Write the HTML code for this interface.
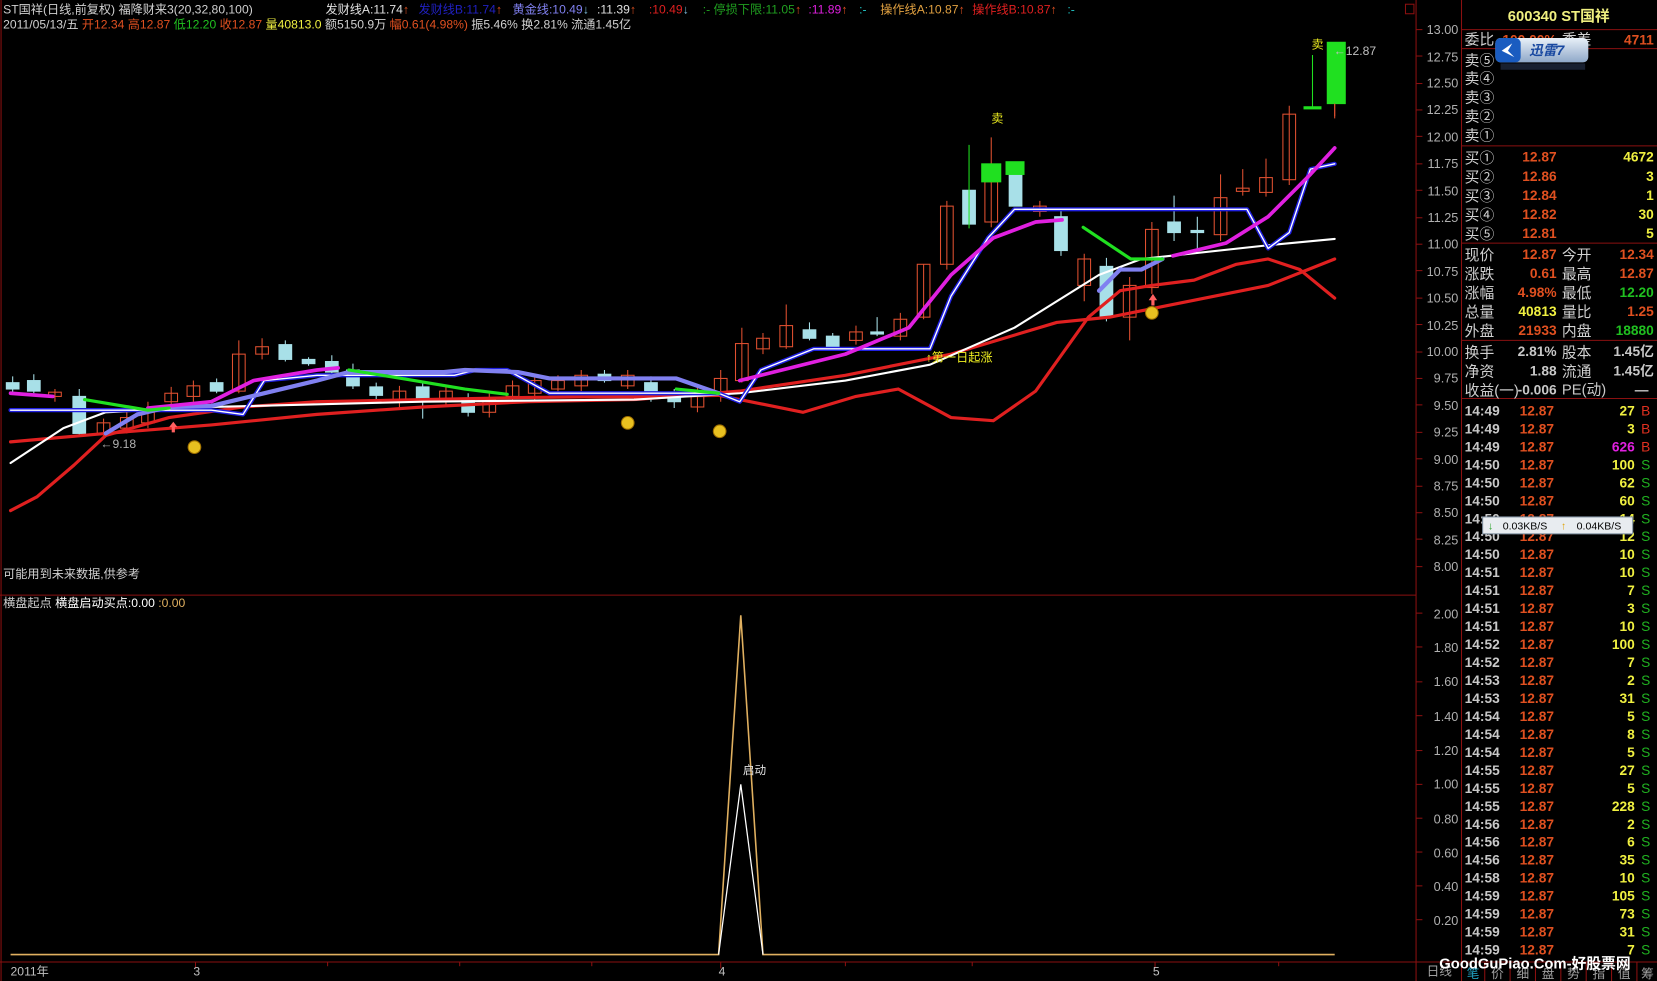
<!DOCTYPE html>
<html><head><meta charset="utf-8"><style>
html,body{margin:0;padding:0;background:#000;overflow:hidden;width:1657px;height:981px}
svg{display:block}
text{font-family:"Liberation Sans","Noto Sans CJK SC",sans-serif}
</style></head><body>
<svg width="1657" height="981" viewBox="0 0 1568 928" preserveAspectRatio="none" xmlns="http://www.w3.org/2000/svg">
<rect width="1568" height="928" fill="#000"/>
<g stroke="#8a1010" stroke-width="1" fill="none">
<line x1="1340" y1="0" x2="1340" y2="928"/>
<line x1="0" y1="563" x2="1340" y2="563"/>
<line x1="0" y1="910" x2="1383" y2="910"/>
<line x1="1383" y1="0" x2="1383" y2="928"/>
<line x1="1383" y1="28" x2="1568" y2="28"/>
<line x1="1383" y1="46" x2="1568" y2="46"/>
<line x1="1383" y1="138" x2="1568" y2="138"/>
<line x1="1383" y1="230" x2="1568" y2="230"/>
<line x1="1383" y1="322" x2="1568" y2="322"/>
<line x1="1383" y1="377" x2="1568" y2="377"/>
<line x1="1" y1="0" x2="1" y2="928"/>
<rect x="1330" y="4" width="8" height="9"/>
</g>
<g stroke="#8a1010">
<line x1="1340" y1="28" x2="1346" y2="28"/><line x1="1340" y1="53" x2="1346" y2="53"/><line x1="1340" y1="79" x2="1346" y2="79"/><line x1="1340" y1="104" x2="1346" y2="104"/><line x1="1340" y1="129" x2="1346" y2="129"/><line x1="1340" y1="155" x2="1346" y2="155"/><line x1="1340" y1="180" x2="1346" y2="180"/><line x1="1340" y1="206" x2="1346" y2="206"/><line x1="1340" y1="231" x2="1346" y2="231"/><line x1="1340" y1="256" x2="1346" y2="256"/><line x1="1340" y1="282" x2="1346" y2="282"/><line x1="1340" y1="307" x2="1346" y2="307"/><line x1="1340" y1="333" x2="1346" y2="333"/><line x1="1340" y1="358" x2="1346" y2="358"/><line x1="1340" y1="383" x2="1346" y2="383"/><line x1="1340" y1="409" x2="1346" y2="409"/><line x1="1340" y1="434" x2="1346" y2="434"/><line x1="1340" y1="460" x2="1346" y2="460"/><line x1="1340" y1="485" x2="1346" y2="485"/><line x1="1340" y1="510" x2="1346" y2="510"/><line x1="1340" y1="536" x2="1346" y2="536"/>
<line x1="1340" y1="580" x2="1346" y2="580"/><line x1="1340" y1="612" x2="1346" y2="612"/><line x1="1340" y1="645" x2="1346" y2="645"/><line x1="1340" y1="677" x2="1346" y2="677"/><line x1="1340" y1="710" x2="1346" y2="710"/><line x1="1340" y1="742" x2="1346" y2="742"/><line x1="1340" y1="774" x2="1346" y2="774"/><line x1="1340" y1="806" x2="1346" y2="806"/><line x1="1340" y1="838" x2="1346" y2="838"/><line x1="1340" y1="870" x2="1346" y2="870"/>
<line x1="185" y1="910" x2="185" y2="916"/><line x1="682" y1="910" x2="682" y2="916"/><line x1="1093" y1="910" x2="1093" y2="916"/><line x1="310" y1="910" x2="310" y2="914"/><line x1="435" y1="910" x2="435" y2="914"/><line x1="560" y1="910" x2="560" y2="914"/><line x1="800" y1="910" x2="800" y2="914"/><line x1="920" y1="910" x2="920" y2="914"/><line x1="1210" y1="910" x2="1210" y2="914"/>
</g>
<g fill="#b0b0b0" font-size="12" text-anchor="end">
<text x="1380" y="32">13.00</text><text x="1380" y="58">12.75</text><text x="1380" y="83">12.50</text><text x="1380" y="108">12.25</text><text x="1380" y="134">12.00</text><text x="1380" y="159">11.75</text><text x="1380" y="185">11.50</text><text x="1380" y="210">11.25</text><text x="1380" y="235">11.00</text><text x="1380" y="261">10.75</text><text x="1380" y="286">10.50</text><text x="1380" y="312">10.25</text><text x="1380" y="337">10.00</text><text x="1380" y="362">9.75</text><text x="1380" y="388">9.50</text><text x="1380" y="413">9.25</text><text x="1380" y="439">9.00</text><text x="1380" y="464">8.75</text><text x="1380" y="489">8.50</text><text x="1380" y="515">8.25</text><text x="1380" y="540">8.00</text>
<text x="1380" y="585">2.00</text><text x="1380" y="617">1.80</text><text x="1380" y="649">1.60</text><text x="1380" y="682">1.40</text><text x="1380" y="714">1.20</text><text x="1380" y="746">1.00</text><text x="1380" y="779">0.80</text><text x="1380" y="811">0.60</text><text x="1380" y="843">0.40</text><text x="1380" y="875">0.20</text>
</g>
<g font-size="11.5">
<text x="3" y="13" fill="#d0d0d0">ST国祥(日线,前复权) 福降财来3(20,32,80,100)</text>
<text x="308" y="13" fill="#e0e0e0">发财线A:11.74<tspan fill="#e05020">↑</tspan></text>
<text x="396" y="13" fill="#2020c0">发财线B:11.74<tspan fill="#e05020">↑</tspan></text>
<text x="485" y="13" fill="#8080f0">黄金线:10.49<tspan fill="#80c0e0">↓</tspan></text>
<text x="565" y="13" fill="#e0e0e0">:11.39<tspan fill="#e05020">↑</tspan></text>
<text x="614" y="13" fill="#e02020">:10.49<tspan fill="#80c0e0">↓</tspan></text>
<text x="665" y="13" fill="#20a020">:- 停损下限:11.05<tspan fill="#e05020">↑</tspan></text>
<text x="765" y="13" fill="#e020e0">:11.89<tspan fill="#e05020">↑</tspan></text>
<text x="813" y="13" fill="#20c0c0">:-</text>
<text x="833" y="13" fill="#e0a040">操作线A:10.87<tspan fill="#e05020">↑</tspan></text>
<text x="920" y="13" fill="#e02020">操作线B:10.87<tspan fill="#e05020">↑</tspan></text>
<text x="1010" y="13" fill="#20c0c0">:-</text>
<text x="3" y="27" fill="#d0d0d0">2011/05/13/五 <tspan fill="#e05020">开12.34 高12.87</tspan> <tspan fill="#20c020">低12.20</tspan> <tspan fill="#e05020">收12.87</tspan> <tspan fill="#f0f040">量40813.0</tspan> 额5150.9万 <tspan fill="#e05020">幅0.61(4.98%)</tspan> 振5.46% 换2.81% 流通1.45亿</text>
<text x="3" y="547" fill="#d0d0d0">可能用到未来数据,供参考</text>
<text x="3" y="574" fill="#d0d0d0">横盘起点  <tspan fill="#fff">横盘启动买点:0.00</tspan> <tspan fill="#e0b060">:0.00</tspan></text>
<text x="10" y="923" fill="#c0c0c0">2011年</text><text x="183" y="923" fill="#c0c0c0">3</text><text x="680" y="923" fill="#c0c0c0">4</text><text x="1091" y="923" fill="#c0c0c0">5</text>
</g>
<g stroke="#e05030" fill="none" stroke-width="1">
<path d="M52 368V380M98 396V415M120 390V410M140 380V405M162 366V385M183 360V380M226 322V372M248 320V340M378 365V385M422 365V385M463 372V395M485 360V380M506 355V378M528 355V372M550 350V370M594 350V368M660 365V390M682 350V380M702 310V362M722 315V335M744 288V330M810 308V326M852 296V322M874 250V302M896 190V255M938 130V215M984 190V205M1026 240V285M1069 262V322M1090 210V278M1155 165V228M1176 160V185M1198 150V186M1220 100V175M1263 95V110"/>
<rect x="46" y="371" width="12" height="4"/><rect x="92" y="400" width="12" height="10"/><rect x="114" y="395" width="12" height="10"/><rect x="134" y="390" width="12" height="10"/><rect x="156" y="372" width="12" height="8"/><rect x="177" y="365" width="12" height="10"/><rect x="220" y="335" width="12" height="35"/><rect x="242" y="328" width="12" height="7"/><rect x="372" y="370" width="12" height="10"/><rect x="416" y="370" width="12" height="8"/><rect x="457" y="378" width="12" height="12"/><rect x="479" y="365" width="12" height="10"/><rect x="500" y="360" width="12" height="12"/><rect x="522" y="360" width="12" height="8"/><rect x="544" y="355" width="12" height="10"/><rect x="588" y="355" width="12" height="10"/><rect x="654" y="370" width="12" height="15"/><rect x="676" y="358" width="12" height="17"/><rect x="696" y="325" width="12" height="35"/><rect x="716" y="320" width="12" height="10"/><rect x="738" y="308" width="12" height="20"/><rect x="804" y="314" width="12" height="8"/><rect x="846" y="302" width="12" height="16"/><rect x="868" y="250" width="12" height="50"/><rect x="890" y="195" width="12" height="55"/><rect x="932" y="172" width="12" height="38"/><rect x="978" y="195" width="12" height="5"/><rect x="1020" y="245" width="12" height="25"/><rect x="1063" y="270" width="12" height="30"/><rect x="1084" y="217" width="12" height="55"/><rect x="1149" y="187" width="12" height="35"/><rect x="1170" y="178" width="12" height="3"/><rect x="1192" y="168" width="12" height="14"/><rect x="1214" y="108" width="12" height="62"/>
</g>
<g stroke="#a8e0e8" fill="#a8e0e8">
<path d="M12 356V372M32 354V372M75 368V412M205 358V372M270 322V342M292 338V346M314 336V354M334 344V368M356 362V378M400 360V396M443 372V394M572 350V362M616 356V380M638 368V386M766 305V322M788 315V330M830 300V318M1004 198V242M1047 244V304M1111 185V228M1133 205V238"/>
<rect x="6" y="362" width="12" height="6"/><rect x="26" y="360" width="12" height="10"/><rect x="69" y="375" width="12" height="35"/><rect x="199" y="362" width="12" height="8"/><rect x="264" y="326" width="12" height="14"/><rect x="286" y="340" width="12" height="4"/><rect x="308" y="342" width="12" height="10"/><rect x="328" y="350" width="12" height="15"/><rect x="350" y="366" width="12" height="8"/><rect x="394" y="366" width="12" height="12"/><rect x="437" y="377" width="12" height="13"/><rect x="566" y="354" width="12" height="6"/><rect x="610" y="362" width="12" height="13"/><rect x="632" y="375" width="12" height="5"/><rect x="760" y="312" width="12" height="8"/><rect x="782" y="318" width="12" height="10"/><rect x="824" y="314" width="12" height="2"/><rect x="911" y="180" width="12" height="32"/><rect x="955" y="165" width="12" height="30"/><rect x="998" y="205" width="12" height="32"/><rect x="1041" y="252" width="12" height="48"/><rect x="1105" y="210" width="12" height="10"/><rect x="1127" y="218" width="12" height="2"/>
</g>
<g stroke="#20e020" fill="#20e020"><path d="M917 137V216M1242 52V102"/><rect x="929" y="155" width="18" height="17"/><rect x="952" y="153" width="17" height="12"/><rect x="1256" y="40" width="17" height="58"/><rect x="1234" y="101" width="16" height="2"/></g>
<path d="M1263 98V112" stroke="#e05030"/>
<g fill="none" stroke-linejoin="round" stroke-linecap="round">
<polyline stroke="#e02020" stroke-width="3" points="10,483 35,470 70,440 100,412 160,395 230,385 300,380 400,378 500,376 600,375 680,374 760,390 810,375 850,368 900,395 940,398 980,370 1030,300 1060,275 1090,270 1130,265 1170,250 1200,245 1230,255 1263,282"/>
<polyline stroke="#e02020" stroke-width="3" points="10,418 100,410 200,402 300,392 400,385 500,380 600,378 700,370 800,355 900,335 1000,305 1050,300 1100,290 1200,270 1263,245"/>
<polyline stroke="#ffffff" stroke-width="2" points="10,438 60,405 100,390 200,385 400,380 600,378 700,372 800,360 880,345 960,310 1040,260 1080,245 1200,232 1263,226"/>
<polyline stroke="#2020e0" stroke-width="4" points="10,388 200,388 230,392 250,360 300,355 430,355 450,350 480,350 520,372 680,372 700,380 720,350 770,330 880,330 900,280 935,225 960,198 1180,198 1200,235 1220,220 1240,160 1263,155"/>
<polyline stroke="#ffffff" stroke-width="1.3" points="10,388 200,388 230,392 250,360 300,355 430,355 450,350 480,350 520,372 680,372 700,380 720,350 770,330 880,330 900,280 935,225 960,198 1180,198 1200,235 1220,220 1240,160 1263,155"/>
<polyline stroke="#8080f0" stroke-width="4" points="100,410 130,392 160,385 200,384 300,360 330,352 420,352 440,350 490,352 520,358 600,358 640,358 680,372"/>
<polyline stroke="#8080f0" stroke-width="4" points="1040,275 1060,255 1080,255 1100,245"/>
<polyline stroke="#e020e0" stroke-width="3.5" points="10,372 50,375"/>
<polyline stroke="#e020e0" stroke-width="3.5" points="140,386 200,380 240,360 300,350 320,348"/>
<polyline stroke="#e020e0" stroke-width="3.5" points="700,360 800,335 860,310 900,260 940,225 980,210 1005,208"/>
<polyline stroke="#e020e0" stroke-width="3.5" points="1110,242 1160,230 1200,205 1240,165 1263,140"/>
<polyline stroke="#20e020" stroke-width="3" points="80,378 140,388 160,386"/>
<polyline stroke="#20e020" stroke-width="3" points="330,350 380,358 440,368 480,373"/>
<polyline stroke="#20e020" stroke-width="3" points="640,368 680,372"/>
<polyline stroke="#20e020" stroke-width="3" points="1025,215 1070,245 1100,245"/>
</g>
<g fill="#e8c020" stroke="#a07000"><circle cx="184" cy="423" r="6"/><circle cx="594" cy="400" r="6"/><circle cx="681" cy="408" r="6"/><circle cx="1090" cy="296" r="6"/></g>
<g fill="#ff6060"><path d="M160 404l4-5 4 5h-2.5v5h-3v-5z"/><path d="M1087 284l4-6 4 6h-2.5v5h-3v-5z"/></g>
<g font-size="11.5"><text x="95" y="424" fill="#b0b0b0">←9.18</text><text x="876" y="342" fill="#f0f020">↑第一日起涨</text><text x="938" y="116" fill="#f0f020">卖</text><text x="1241" y="46" fill="#f0f020">卖</text><text x="1262" y="52" fill="#c0c0c0">←12.87</text></g>
<polyline fill="none" stroke="#e0b060" stroke-width="1.5" points="10,903 680,903 701,582 722,903 1263,903"/>
<polyline fill="none" stroke="#ffffff" stroke-width="1.2" points="680,903 701,742 722,903"/>
<text x="703" y="732" fill="#e0e0e0" font-size="11">启动</text>
<g font-size="14" font-weight="bold"><text x="1475" y="20" fill="#f0f080" text-anchor="middle">600340 ST国祥</text></g>
<g font-size="14" fill="#d0d0d0">
<text x="1386" y="42">委比</text><text x="1478" y="42">委差</text><text x="1386" y="62">卖⑤</text><text x="1386" y="79">卖④</text><text x="1386" y="97">卖③</text><text x="1386" y="115">卖②</text><text x="1386" y="133">卖①</text>
<text x="1386" y="154">买①</text><text x="1386" y="172">买②</text><text x="1386" y="190">买③</text><text x="1386" y="208">买④</text><text x="1386" y="226">买⑤</text>
<text x="1386" y="246">现价</text><text x="1386" y="264">涨跌</text><text x="1386" y="282">涨幅</text><text x="1386" y="300">总量</text><text x="1386" y="318">外盘</text>
<text x="1478" y="246">今开</text><text x="1478" y="264">最高</text><text x="1478" y="282">最低</text><text x="1478" y="300">量比</text><text x="1478" y="318">内盘</text>
<text x="1386" y="338">换手</text><text x="1386" y="356">净资</text><text x="1386" y="374">收益(一)</text>
<text x="1478" y="338">股本</text><text x="1478" y="356">流通</text>
</g>
<g font-size="13" font-weight="bold" text-anchor="end">
<text x="1473" y="42" fill="#e05020">100.00%</text>
<text x="1565" y="42" fill="#e05020">4711</text>
<text x="1473" y="153" fill="#e05020">12.87</text><text x="1473" y="171" fill="#e05020">12.86</text><text x="1473" y="189" fill="#e05020">12.84</text><text x="1473" y="207" fill="#e05020">12.82</text><text x="1473" y="225" fill="#e05020">12.81</text>
<text x="1565" y="153" fill="#f0f040">4672</text><text x="1565" y="171" fill="#f0f040">3</text><text x="1565" y="189" fill="#f0f040">1</text><text x="1565" y="207" fill="#f0f040">30</text><text x="1565" y="225" fill="#f0f040">5</text>
<text x="1473" y="245" fill="#e05020">12.87</text><text x="1473" y="263" fill="#e05020">0.61</text><text x="1473" y="281" fill="#e05020">4.98%</text><text x="1473" y="299" fill="#f0f040">40813</text><text x="1473" y="317" fill="#e05020">21933</text>
<text x="1565" y="245" fill="#e05020">12.34</text><text x="1565" y="263" fill="#e05020">12.87</text><text x="1565" y="281" fill="#20c020">12.20</text><text x="1565" y="299" fill="#e05020">1.25</text><text x="1565" y="317" fill="#20c020">18880</text>
<text x="1473" y="337" fill="#c8c8c8">2.81%</text><text x="1473" y="355" fill="#c8c8c8">1.88</text><text x="1473" y="373" fill="#c8c8c8">-0.006</text><text x="1478" y="373" fill="#c8c8c8" text-anchor="start" font-weight="normal" font-size="14">PE(动)</text>
<text x="1565" y="337" fill="#c8c8c8">1.45亿</text><text x="1565" y="355" fill="#c8c8c8">1.45亿</text><text x="1560" y="373" fill="#c8c8c8">—</text>
</g>
<g font-size="13" font-weight="bold">
<g fill="#c8c8c8"><text x="1386" y="393">14:49</text><text x="1386" y="410">14:49</text><text x="1386" y="427">14:49</text><text x="1386" y="444">14:50</text><text x="1386" y="461">14:50</text><text x="1386" y="478">14:50</text><text x="1386" y="495">14:50</text><text x="1386" y="512">14:50</text><text x="1386" y="529">14:50</text><text x="1386" y="546">14:51</text><text x="1386" y="563">14:51</text><text x="1386" y="580">14:51</text><text x="1386" y="597">14:51</text><text x="1386" y="614">14:52</text><text x="1386" y="631">14:52</text><text x="1386" y="648">14:53</text><text x="1386" y="665">14:53</text><text x="1386" y="682">14:54</text><text x="1386" y="699">14:54</text><text x="1386" y="716">14:54</text><text x="1386" y="733">14:55</text><text x="1386" y="750">14:55</text><text x="1386" y="767">14:55</text><text x="1386" y="784">14:56</text><text x="1386" y="801">14:56</text><text x="1386" y="818">14:56</text><text x="1386" y="835">14:58</text><text x="1386" y="852">14:59</text><text x="1386" y="869">14:59</text><text x="1386" y="886">14:59</text><text x="1386" y="903">14:59</text></g>
<g fill="#e05020"><text x="1438" y="393">12.87</text><text x="1438" y="410">12.87</text><text x="1438" y="427">12.87</text><text x="1438" y="444">12.87</text><text x="1438" y="461">12.87</text><text x="1438" y="478">12.87</text><text x="1438" y="495">12.87</text><text x="1438" y="512">12.87</text><text x="1438" y="529">12.87</text><text x="1438" y="546">12.87</text><text x="1438" y="563">12.87</text><text x="1438" y="580">12.87</text><text x="1438" y="597">12.87</text><text x="1438" y="614">12.87</text><text x="1438" y="631">12.87</text><text x="1438" y="648">12.87</text><text x="1438" y="665">12.87</text><text x="1438" y="682">12.87</text><text x="1438" y="699">12.87</text><text x="1438" y="716">12.87</text><text x="1438" y="733">12.87</text><text x="1438" y="750">12.87</text><text x="1438" y="767">12.87</text><text x="1438" y="784">12.87</text><text x="1438" y="801">12.87</text><text x="1438" y="818">12.87</text><text x="1438" y="835">12.87</text><text x="1438" y="852">12.87</text><text x="1438" y="869">12.87</text><text x="1438" y="886">12.87</text><text x="1438" y="903">12.87</text></g>
<g fill="#f0f040" text-anchor="end"><text x="1547" y="393">27</text><text x="1547" y="410">3</text><text x="1547" y="427" fill="#e020e0">626</text><text x="1547" y="444">100</text><text x="1547" y="461">62</text><text x="1547" y="478">60</text><text x="1547" y="495">14</text><text x="1547" y="512">12</text><text x="1547" y="529">10</text><text x="1547" y="546">10</text><text x="1547" y="563">7</text><text x="1547" y="580">3</text><text x="1547" y="597">10</text><text x="1547" y="614">100</text><text x="1547" y="631">7</text><text x="1547" y="648">2</text><text x="1547" y="665">31</text><text x="1547" y="682">5</text><text x="1547" y="699">8</text><text x="1547" y="716">5</text><text x="1547" y="733">27</text><text x="1547" y="750">5</text><text x="1547" y="767">228</text><text x="1547" y="784">2</text><text x="1547" y="801">6</text><text x="1547" y="818">35</text><text x="1547" y="835">10</text><text x="1547" y="852">105</text><text x="1547" y="869">73</text><text x="1547" y="886">31</text><text x="1547" y="903">7</text></g>
<g fill="#20b020" font-weight="normal"><text x="1553" y="393" fill="#e03020">B</text><text x="1553" y="410" fill="#e03020">B</text><text x="1553" y="427" fill="#e03020">B</text><text x="1553" y="444">S</text><text x="1553" y="461">S</text><text x="1553" y="478">S</text><text x="1553" y="495">S</text><text x="1553" y="512">S</text><text x="1553" y="529">S</text><text x="1553" y="546">S</text><text x="1553" y="563">S</text><text x="1553" y="580">S</text><text x="1553" y="597">S</text><text x="1553" y="614">S</text><text x="1553" y="631">S</text><text x="1553" y="648">S</text><text x="1553" y="665">S</text><text x="1553" y="682">S</text><text x="1553" y="699">S</text><text x="1553" y="716">S</text><text x="1553" y="733">S</text><text x="1553" y="750">S</text><text x="1553" y="767">S</text><text x="1553" y="784">S</text><text x="1553" y="801">S</text><text x="1553" y="818">S</text><text x="1553" y="835">S</text><text x="1553" y="852">S</text><text x="1553" y="869">S</text><text x="1553" y="886">S</text><text x="1553" y="903">S</text></g>
</g>
<defs><linearGradient id="xl" x1="0" y1="0" x2="0" y2="1"><stop offset="0" stop-color="#e8f0f8"/><stop offset="1" stop-color="#8fa8c8"/></linearGradient></defs>
<rect x="1415" y="36" width="88" height="23" rx="5" fill="url(#xl)"/>
<rect x="1415" y="36" width="24" height="23" rx="5" fill="#1a5cc0"/>
<path d="M1421 48l10-7-4 7 6 6z" fill="#fff"/>
<text x="1447" y="52" fill="#1848a0" font-size="13" font-weight="bold" font-style="italic">迅雷7</text>
<rect x="1420" y="60" width="80" height="6" fill="#304060" opacity="0.5"/>
<rect x="1403" y="489" width="142" height="16" fill="#e8ecf0" stroke="#8090a0"/>
<text x="1408" y="501" font-size="10" fill="#20a020">↓</text><text x="1422" y="501" font-size="10" fill="#000">0.03KB/S</text>
<text x="1477" y="501" font-size="10" fill="#e0a000">↑</text><text x="1492" y="501" font-size="10" fill="#000">0.04KB/S</text>
<g stroke="#8a1010"><line x1="1340" y1="910" x2="1568" y2="910"/><line x1="1405" y1="910" x2="1405" y2="928"/><line x1="1429" y1="910" x2="1429" y2="928"/><line x1="1453" y1="910" x2="1453" y2="928"/><line x1="1477" y1="910" x2="1477" y2="928"/><line x1="1501" y1="910" x2="1501" y2="928"/><line x1="1525" y1="910" x2="1525" y2="928"/><line x1="1549" y1="910" x2="1549" y2="928"/></g>
<g font-size="12" fill="#a0a0a0"><text x="1350" y="923">日线</text><text x="1388" y="925" fill="#20a0c0">笔</text><text x="1411" y="925">价</text><text x="1435" y="925">细</text><text x="1459" y="925">盘</text><text x="1483" y="925">势</text><text x="1507" y="925">指</text><text x="1531" y="925">值</text><text x="1553" y="925">筹</text></g>
<text x="1362" y="916" font-size="14" font-weight="bold" fill="#ffffff" font-family="Liberation Mono,Noto Sans CJK SC,monospace">GoodGuPiao.Com-好股票网</text>
</svg>
</body></html>
